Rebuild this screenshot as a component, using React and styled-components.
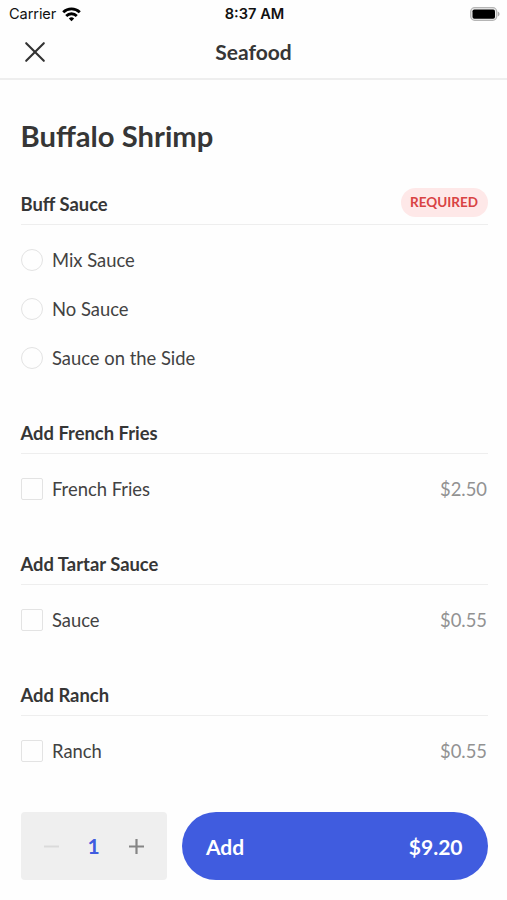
import React from 'react';
import styled, { createGlobalStyle } from 'styled-components';

const Global = createGlobalStyle`
  *{box-sizing:border-box}
  body{margin:0;background:#fefefe;font-family:Lato,sans-serif;color:#363636}
  button{font:inherit;border:0;padding:0;background:none;color:inherit}
`;
const Screen = styled.main`width:507px;height:900px;overflow:hidden;display:flex;flex-direction:column;`;
const StatusBar = styled.div`
  height:27px;flex:none;display:grid;grid-template-columns:1fr auto 1fr;align-items:center;
  padding:1px 7px 0 9px;font:14.6px Inter,sans-serif;color:#111;
`;
const Carrier = styled.div`display:flex;align-items:center;gap:6px;letter-spacing:-.1px;`;
const Clock = styled.span`font-weight:600;`;
const Battery = styled.svg`justify-self:end;margin-bottom:1px;`;
const NavBar = styled.header`
  height:53px;flex:none;border-bottom:2px solid #eee;display:grid;grid-template-columns:1fr auto 1fr;
  align-items:center;padding:0 24px 2px;
`;
const NavTitle = styled.div`font-size:21px;font-weight:700;line-height:26px;`;
const CloseButton = styled.button`display:flex;width:22px;height:22px;`;
const Content = styled.div`flex:1;min-height:0;overflow:hidden;padding:37px 19.5px 0 20.5px;`;
const Title = styled.h1`margin:0 0 29px;font-size:29.2px;font-weight:700;line-height:38px;`;
const Group = styled.section`margin-bottom:31px;`;
const GroupHead = styled.div`
  height:41px;display:flex;align-items:center;justify-content:space-between;
  border-bottom:1px solid #eee;margin-bottom:10px;
`;
const GroupTitle = styled.h2`margin:0;font-size:18.4px;font-weight:700;line-height:24px;`;
const Required = styled.span`
  width:87px;height:29px;border-radius:15px;background:#fee8e8;color:#d94343;margin-bottom:4px;
  font-size:13.5px;font-weight:700;display:flex;align-items:center;justify-content:center;
`;
const Option = styled.div`height:49px;display:flex;align-items:center;font-size:18.4px;color:#424242;`;
const Mark = styled.span`
  width:22px;height:22px;border:1.5px solid #e3e3e3;border-radius:${p => (p.$round ? '50%' : '2px')};margin-right:9.5px;
`;
const Price = styled.span`margin-left:auto;padding-right:.5px;color:#929292;`;
const Footer = styled.footer`height:106px;flex:none;padding:18px 19.5px 20px 20.5px;display:flex;gap:15px;`;
const Stepper = styled.div`
  width:146px;height:68px;background:#efefef;border-radius:4px;display:flex;
  align-items:center;justify-content:space-between;padding:0 22px;
`;
const StepButton = styled.button`display:flex;`;
const Quantity = styled.span`color:#405cdf;font-size:21px;font-weight:700;line-height:26px;`;
const AddButton = styled.button`
  flex:1;height:68px;border-radius:34px;background:#405cdf;color:#fff;display:flex;
  align-items:center;justify-content:space-between;padding:0 25px 0 24.5px;font-size:21px;font-weight:700;
`;

const groups = [
  { title: 'Buff Sauce', required: true, options: [['Mix Sauce'], ['No Sauce'], ['Sauce on the Side']] },
  { title: 'Add French Fries', options: [['French Fries', '$2.50']] },
  { title: 'Add Tartar Sauce', options: [['Sauce', '$0.55']] },
  { title: 'Add Ranch', options: [['Ranch', '$0.55']] },
];

export default function App() {
  return (
    <Screen>
      <Global />
      <StatusBar>
        <Carrier>
          Carrier
          <svg width="19" height="15" viewBox="0 0 19 15" fill="none" stroke="#000" strokeWidth="2.8">
            <path d="M1.2 5.2a12 12 0 0 1 16.6 0M4.2 8.9a7.6 7.6 0 0 1 10.6 0" />
            <path d="M9.5 14.2l-2.7-2.8a4 4 0 0 1 5.4 0z" fill="#000" stroke="none" />
          </svg>
        </Carrier>
        <Clock>8:37 AM</Clock>
        <Battery width="30" height="14" viewBox="0 0 30 14">
          <rect x=".7" y=".7" width="26" height="12.6" rx="4" fill="#eee" stroke="#b5b5b5" strokeWidth="1.3" />
          <rect x="2.5" y="2.5" width="22.5" height="9.2" rx="1.8" />
          <path d="M27.8 4.5c2.3 1 2.3 4 0 5z" fill="#aaa" />
        </Battery>
      </StatusBar>
      <NavBar>
        <CloseButton aria-label="Close">
          <svg width="22" height="22" viewBox="0 0 22 22" stroke="#333" strokeWidth="2.1" strokeLinecap="round"><path d="M2.2 2.2l17.6 17.6M19.8 2.2L2.2 19.8" /></svg>
        </CloseButton>
        <NavTitle>Seafood</NavTitle>
      </NavBar>
      <Content>
        <Title>Buffalo Shrimp</Title>
        {groups.map(g => (
          <Group key={g.title}>
            <GroupHead>
              <GroupTitle>{g.title}</GroupTitle>
              {g.required && <Required>REQUIRED</Required>}
            </GroupHead>
            {g.options.map(([name, price]) => (
              <Option key={name}>
                <Mark $round={g.required} />
                {name}
                {price && <Price>{price}</Price>}
              </Option>
            ))}
          </Group>
        ))}
      </Content>
      <Footer>
        <Stepper>
          <StepButton aria-label="Decrease"><svg width="17" height="17" stroke="#dadada" strokeWidth="2"><path d="M1 8.5h15" /></svg></StepButton>
          <Quantity>1</Quantity>
          <StepButton aria-label="Increase"><svg width="17" height="17" stroke="#858585" strokeWidth="2.2"><path d="M1 8.5h15M8.5 1v15" /></svg></StepButton>
        </Stepper>
        <AddButton><span>Add</span><span>$9.20</span></AddButton>
      </Footer>
    </Screen>
  );
}
